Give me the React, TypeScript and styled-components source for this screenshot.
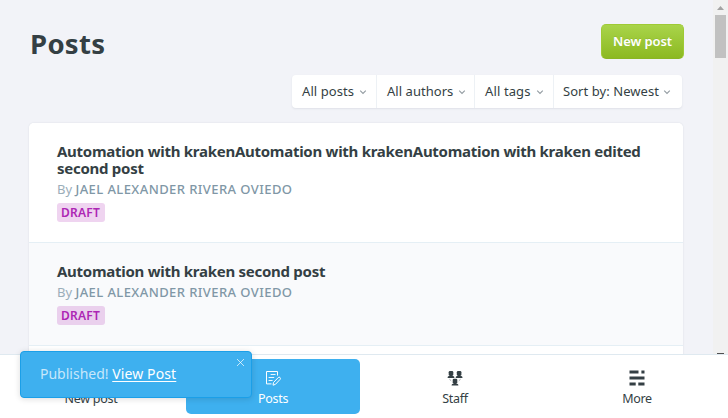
import React from 'react';
import styled, { createGlobalStyle } from 'styled-components';

const Global = createGlobalStyle`
  *, *::before, *::after { box-sizing: border-box; }
  html, body, #root { height: 100%; }
  body {
    margin: 0;
    overflow: hidden;
    background: #fff;
    color: #343f44;
    font: 400 13px/17px "Noto Sans", sans-serif;
  }
  h1, h3, p { margin: 0; }
  button { font: inherit; color: inherit; border: 0; padding: 0; background: none; }
`;

const Shell = styled.div`
  position: relative;
  display: flex;
  flex-direction: column;
  height: 418px;
  width: 728px;
  overflow: hidden;
`;

const Viewport = styled.div`
  display: flex;
  height: 354px;
  overflow: hidden;
  background: #f2f3f8;
`;

const Content = styled.main`
  flex: 1;
  min-width: 0;
  padding: 24px 29px 0;
`;

const Header = styled.header`
  display: flex;
  justify-content: space-between;
  align-items: center;
  height: 35px;
`;

const Title = styled.h1`
  margin: 5px 0 0 1px;
  font-size: 27.5px;
  line-height: 36px;
  font-weight: 700;
  letter-spacing: 0.3px;
`;

const PrimaryButton = styled.button`
  width: 83px;
  height: 35px;
  border: 1px solid #9fca35;
  border-bottom-color: #8ab524;
  border-radius: 5px;
  background: linear-gradient(#a9d44a, #8cb921);
  color: #fff;
  font-weight: 600;
  letter-spacing: -0.1px;
  text-shadow: 0 -1px 0 rgba(0, 0, 0, 0.08);
`;

const Filters = styled.div`
  display: flex;
  width: 390px;
  height: 33px;
  margin: 16px 2px 15px auto;
  background: #fff;
  border-radius: 4px;
  box-shadow: 0 1px 2px rgba(60, 80, 100, 0.1);
`;

const Filter = styled.button<{ $width: number; $spacing: number }>`
  display: flex;
  align-items: center;
  gap: 5px;
  width: ${p => p.$width}px;
  padding-left: 10px;
  white-space: nowrap;
  letter-spacing: ${p => p.$spacing}px;
  & + & { border-left: 1px solid #edf1f5; }
  &:last-child { gap: 4px; padding-left: 9px; }
`;

const Card = styled.section`
  width: 654px;
  background: #fff;
  border-radius: 5px 5px 0 0;
  box-shadow: 0 0 2px rgba(60, 80, 100, 0.14);
  overflow: hidden;
`;

const Row = styled.article<{ $shaded?: boolean }>`
  padding: 20px 28px;
  border-bottom: 1px solid #e5eff5;
  background: ${p => (p.$shaded ? '#f9fafc' : '#fff')};
`;

const PostTitle = styled.h3`
  width: 594px;
  font-size: 15px;
  line-height: 17px;
  font-weight: 700;
  letter-spacing: -0.27px;
`;

const Byline = styled.p`
  margin-top: 4px;
  line-height: 16px;
  color: #9baeb9;
`;

const Author = styled.span`
  font-weight: 500;
  color: #8097a6;
  letter-spacing: 0.42px;
`;

const Badge = styled.span`
  display: block;
  width: 48px;
  height: 19px;
  margin: 6px 0 0;
  padding-left: 4px;
  border-radius: 3px;
  background: rgba(173, 38, 180, 0.2);
  color: #ad26b4;
  font-size: 12px;
  line-height: 19px;
  font-weight: 600;
  letter-spacing: 0.25px;
`;

const Scrollbar = styled.div`
  display: flex;
  flex-direction: column;
  align-items: center;
  width: 15px;
  height: 354px;
  background: #f1f1f1;
`;

const ArrowUp = styled.svg`
  flex: none;
  width: 15px;
  height: 15px;
  fill: #a3a3a3;
`;

const Thumb = styled.div`
  width: 11px;
  height: 43px;
  background: #c1c1c1;
`;

const ArrowDown = styled.div`
  width: 7px;
  height: 1px;
  margin-top: auto;
  background: #505050;
`;

const Nav = styled.nav`
  display: flex;
  height: 64px;
  border-top: 1px solid #dfe9f0;
  background: #fff;
`;

const Tab = styled.a<{ $active?: boolean }>`
  display: flex;
  flex: 1;
  flex-direction: column;
  align-items: center;
  gap: 5px;
  height: 55px;
  margin: 4px;
  padding-top: 11px;
  border-radius: 5px;
  font-size: 12.5px;
  line-height: 16px;
  letter-spacing: -0.28px;
  color: ${p => (p.$active ? '#fff' : '#343f44')};
  background: ${p => (p.$active ? '#3eb0ef' : 'transparent')};
  svg { display: block; width: 16px; height: 16px; }
`;

const Toast = styled.aside`
  position: absolute;
  left: 20px;
  top: 351px;
  display: flex;
  justify-content: space-between;
  width: 232px;
  height: 47px;
  padding: 0 6px 0 19px;
  border: 1px solid #1b9fe8;
  border-radius: 4px;
  background: #3eb0ef;
  box-shadow: 0 1px 6px rgba(0, 0, 0, 0.14);
  color: rgba(255, 255, 255, 0.72);
  font-size: 14px;
  line-height: 44px;
  svg { width: 9px; height: 9px; margin-top: 6px; }
`;

const ToastLink = styled.a`
  color: #fff;
  letter-spacing: 0.12px;
  text-decoration: underline;
  text-underline-offset: 2px;
`;

const Chevron = () => (
  <svg width="8" height="6" viewBox="0 0 8 6" fill="none" stroke="#929ba1" strokeWidth="1.1">
    <path d="M1.2 1.6 4 4.4 6.8 1.6" />
  </svg>
);

const PostsIcon = () => (
  <svg viewBox="0 0 16 16" fill="none" stroke="#fff" strokeLinejoin="round">
    <path d="M12.5 5.6V1.5h-11v12.4h5" />
    <path d="M5.6 4.5h4.9M3.6 7.5h5.6M3.6 10.5h4" strokeWidth=".9" />
    <path d="m8 15.2.5-2.7 4.7-4.9a1.3 1.3 0 0 1 1.9 1.8l-4.6 4.9L8 15.2Z" />
  </svg>
);

const Person = ({ x, y }: { x: number; y: number }) => (
  <g transform={`translate(${x} ${y})`}>
    <rect x="1" width="4.6" height="4.8" rx="1.3" />
    <path d="M2.1 4h2.4v.8l1.5.5q.7.3.7 1.6H-.1q0-1.3.7-1.6l1.5-.5Z" />
  </g>
);

const StaffIcon = () => (
  <svg viewBox="0 0 16 16" fill="#343f44">
    <Person x={0.7} y={1} />
    <Person x={8.8} y={1} />
    <Person x={4.7} y={8.7} />
    <path d="M2.6 8.8q.2 1.5 1.7 2.2M13.4 8.8q-.2 1.5-1.7 2.2" fill="none" stroke="#a4aaad" strokeWidth=".8" />
  </svg>
);

const MoreIcon = () => (
  <svg viewBox="0 0 16 16" fill="#343f44">
    <path d="M.5.5h9v3h-9zM12.4.5h3.1v3h-3.1zM.5 6.5h15v3H.5zM.5 12.5h6.2v3H.5zM9.3 12.5h6.2v3H9.3z" />
  </svg>
);

const NewPostIcon = () => (
  <svg viewBox="0 0 16 16" fill="none" stroke="#343f44">
    <path d="m2 14 1-4 8-8 3 3-8 8-4 1Z" />
  </svg>
);

const filters = [
  { label: 'All posts', width: 84, spacing: 0.07 },
  { label: 'All authors', width: 98, spacing: 0.04 },
  { label: 'All tags', width: 79, spacing: 0.12 },
  { label: 'Sort by: Newest', width: 129, spacing: 0.06 },
];

const posts = [
  'Automation with krakenAutomation with krakenAutomation with kraken edited second post',
  'Automation with kraken second post',
];

const tabs = [
  { label: 'New post', icon: <NewPostIcon /> },
  { label: 'Posts', icon: <PostsIcon />, active: true },
  { label: 'Staff', icon: <StaffIcon /> },
  { label: 'More', icon: <MoreIcon /> },
];

export default function App() {
  return (
    <Shell>
      <Global />
      <Viewport>
        <Content>
          <Header>
            <Title>Posts</Title>
            <PrimaryButton>New post</PrimaryButton>
          </Header>
          <Filters>
            {filters.map(f => (
              <Filter key={f.label} $width={f.width} $spacing={f.spacing}>
                {f.label}
                <Chevron />
              </Filter>
            ))}
          </Filters>
          <Card>
            {posts.map((title, i) => (
              <Row key={title} $shaded={i % 2 === 1}>
                <PostTitle>{title}</PostTitle>
                <Byline>
                  By <Author>JAEL ALEXANDER RIVERA OVIEDO</Author>
                </Byline>
                <Badge>DRAFT</Badge>
              </Row>
            ))}
            <Row />
          </Card>
        </Content>
        <Scrollbar>
          <ArrowUp viewBox="0 0 15 15">
            <path d="M4 10h7L7.5 6z" />
          </ArrowUp>
          <Thumb />
          <ArrowDown />
        </Scrollbar>
      </Viewport>
      <Nav>
        {tabs.map(t => (
          <Tab key={t.label} $active={t.active}>
            {t.icon}
            {t.label}
          </Tab>
        ))}
      </Nav>
      <Toast>
        <span>
          Published! <ToastLink>View Post</ToastLink>
        </span>
        <svg viewBox="0 0 9 9" fill="none" stroke="rgba(255,255,255,.7)">
          <path d="m1 1 7 7M8 1 1 8" />
        </svg>
      </Toast>
    </Shell>
  );
}
